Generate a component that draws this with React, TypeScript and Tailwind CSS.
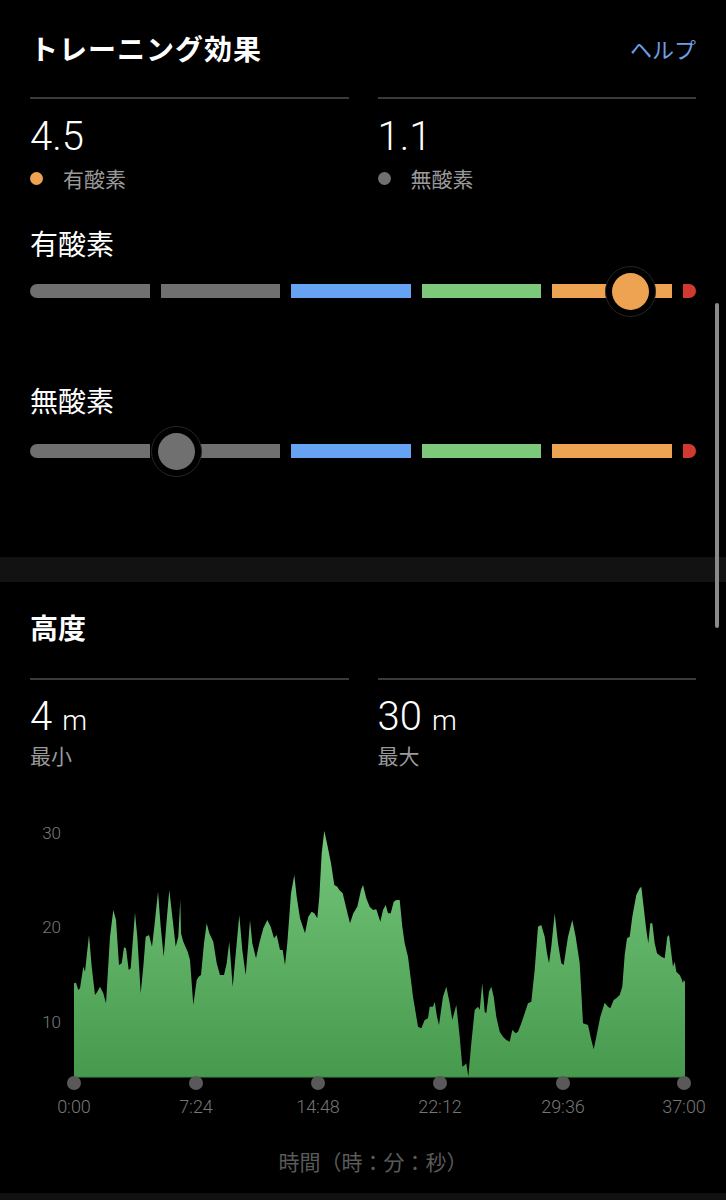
import React from "react";

const PTS: [number, number][] = [
  [74, 983.3], [76, 982.7], [78.3, 990], [80, 988.3], [83.3, 966.7], [85, 971.7], [89, 935], [91.7, 966.7],
  [95, 995], [97.3, 991.7], [100, 986.7], [103.3, 993.3], [106, 1003.3], [110, 936.7], [113.3, 910], [116, 920],
  [119, 965], [121.7, 963.3], [124, 947.3], [126, 948.3], [128.7, 970], [130.7, 968.3], [135, 912.7], [137.3, 936.7],
  [140.7, 993.3], [143.3, 966.7], [145.7, 936.7], [149, 935], [152, 946.7], [154.7, 923.3], [158, 891.7], [160.7, 926.7],
  [163.7, 956.7], [166.7, 920], [169.3, 890], [172.7, 920], [175.7, 946.7], [178.3, 936.7], [180.3, 900], [181, 933.3],
  [183.3, 941.7], [187.7, 951.7], [190, 960], [193.3, 1005], [196.7, 980], [198.7, 976.7], [201, 975], [204, 943.3],
  [206.7, 923.3], [209.3, 933.3], [213.3, 941.7], [216.7, 963.3], [220, 975], [224, 975], [226.7, 963.3], [229.3, 941.7],
  [232.7, 986.7], [236.7, 943.3], [239.3, 915], [242.3, 950], [245.7, 975], [248.3, 943.3], [250, 920], [252.3, 943.3],
  [256, 958.3], [259.3, 943.3], [263.3, 928.3], [267.3, 920], [270.7, 926.7], [274, 938.3], [276.7, 935], [280, 950],
  [282.7, 950], [285, 965], [287.3, 943.3], [291, 893.3], [294.3, 875], [296.7, 896.7], [300, 918.3], [305, 933.3],
  [308.3, 916.7], [311.7, 911.7], [314.3, 913.3], [317.3, 918.3], [319.3, 896.7], [321.7, 853.3], [324.3, 830.7], [327.7, 846.7],
  [331, 863.3], [334.3, 885], [337.3, 886.7], [339.3, 890], [342.7, 893.3], [346.7, 910], [350, 923.3], [353.3, 913.3],
  [357.3, 906.7], [361, 890], [363, 885], [366.3, 898.3], [369.7, 906.7], [373, 910], [376.3, 909.3], [380.3, 921.7],
  [383, 910], [385.7, 905], [388, 913.3], [390.7, 913.3], [393.7, 901.7], [396.3, 900], [399.7, 900], [402.3, 926.7],
  [404.7, 943.3], [408, 956.7], [413, 996.7], [418, 1026.7], [421.3, 1028.3], [424.7, 1020], [428, 1018.3], [429.7, 1006.7],
  [433, 1006.7], [434.7, 1001.7], [437, 1016.7], [439, 1025], [443, 996.7], [446.3, 986.7], [449.7, 1003.3], [452.3, 1020],
  [456.3, 1005], [459.7, 1036.7], [462.3, 1066.7], [464.7, 1065], [466.3, 1063.3], [468.3, 1076.7], [471.3, 1043.3], [474.7, 1010],
  [478, 1006.7], [479.7, 1010], [482.3, 983.3], [484.7, 1011.7], [486.3, 1013.3], [489, 991.7], [491.3, 986.7], [493.7, 996.7],
  [496.3, 1016.7], [499.7, 1031.7], [503, 1036.7], [506.3, 1040], [509.7, 1041.7], [512.3, 1030], [515.7, 1033.3], [518, 1031.7],
  [521.3, 1023.3], [524.7, 1013.3], [528, 1003.3], [531.3, 1001.7], [534.7, 970], [538, 926.7], [541.3, 925], [544.7, 936.7],
  [547, 953.3], [549, 963.3], [551.3, 946.7], [554.7, 913.3], [558, 943.3], [561.3, 963.3], [563.7, 965], [568, 936.7],
  [572.3, 920], [575.7, 936.7], [579.7, 963.3], [583, 1023.3], [588, 1025], [591.3, 1040], [593.7, 1049.3], [596.3, 1036.7],
  [600.3, 1016.7], [604.7, 1002.7], [608, 1006.7], [610.3, 1008.3], [613.7, 1000], [616.3, 998.3], [619.7, 995], [622.3, 986.7],
  [624.7, 955], [627, 938.3], [629.7, 936.7], [632.3, 916.7], [636.3, 895], [639.7, 888.3], [641.3, 886.7], [644, 910],
  [646.3, 930], [648.3, 943.3], [650.3, 923.3], [652.3, 923.3], [654.7, 943.3], [657, 953.3], [661.3, 956.7], [664.7, 958.3],
  [667.3, 936.7], [669, 935], [671.3, 953.3], [673, 966.7], [674.7, 961.7], [676.3, 971.7], [679.7, 975], [681.3, 978.3],
  [683, 983.3], [683.7, 980], [685, 981.7],
];

const AREA =
  "M74 1077 " + PTS.map(([x, y]) => `L${x} ${y}`).join(" ") + " L685 1077 Z";

const TICKS: [number, string][] = [
  [74, "0:00"],
  [196, "7:24"],
  [318, "14:48"],
  [440, "22:12"],
  [563, "29:36"],
  [684, "37:00"],
];

function Bar({ knob, knobColor, className = "" }: { knob: number; knobColor: string; className?: string }) {
  return (
    <div className={`relative h-[52px] flex items-center ${className}`}>
      <div className="flex w-full gap-[11px] h-[14px]">
        <div className="flex-1 bg-[#707070] rounded-l-full" />
        <div className="flex-1 bg-[#707070]" />
        <div className="flex-1 bg-[#66a3f2]" />
        <div className="flex-1 bg-[#7dc97b]" />
        <div className="flex-1 bg-[#eea352]" />
        <div className="w-[13px] bg-[#d23a30] rounded-r-full" />
      </div>
      <div
        className="absolute top-[0.5px] w-[51px] h-[51px] rounded-full bg-black border border-[#262626] flex items-center justify-center"
        style={{ left: knob - 25.5 }}
      >
        <div className={`w-[37px] h-[37px] rounded-full ${knobColor}`} />
      </div>
    </div>
  );
}

export default function App() {
  const jp = "font-['Noto_Sans_CJK_JP',sans-serif]";
  const num = "font-['Roboto','Liberation_Sans',sans-serif]";
  return (
    <div className={`relative w-[726px] h-[1200px] bg-black overflow-hidden ${jp}`}>
      {/* Training effect */}
      <section className="px-[30px] pt-[28px]">
        <div className="flex items-center justify-between h-[40px]">
          <h1 className="text-[28px] leading-[40px] font-bold text-white tracking-[1px]">トレーニング効果</h1>
          <span className="text-[22px] leading-[40px] text-[#6e9ee4]">ヘルプ</span>
        </div>
        <div className="grid grid-cols-2 gap-x-[29px] mt-[29px]">
          <div>
            <div className="h-[2px] bg-[#3a3a3a]" />
            <div className={`mt-[14px] text-[40px] leading-[48px] font-light text-white ${num}`}>4.5</div>
            <div className="mt-[3px] flex items-center h-[28px]">
              <span className="w-[13px] h-[13px] rounded-full bg-[#eea352]" />
              <span className="ml-[20px] text-[21px] leading-[28px] text-[#9a9a9a]">有酸素</span>
            </div>
          </div>
          <div>
            <div className="h-[2px] bg-[#3a3a3a]" />
            <div className={`mt-[14px] text-[40px] leading-[48px] font-light text-white ${num}`}>1.1</div>
            <div className="mt-[3px] flex items-center h-[28px]">
              <span className="w-[13px] h-[13px] rounded-full bg-[#707070]" />
              <span className="ml-[20px] text-[21px] leading-[28px] text-[#9a9a9a]">無酸素</span>
            </div>
          </div>
        </div>
        <div className="mt-[31px] text-[28px] leading-[40px] text-white">有酸素</div>
        <Bar knob={600} knobColor="bg-[#eea352]" className="mt-[2px]" />
        <div className="mt-[63px] text-[28px] leading-[40px] text-white">無酸素</div>
        <Bar knob={146} knobColor="bg-[#707070]" className="mt-[5px]" />
      </section>

      <div className="mt-[80px] h-[25px] bg-[#121212]" />

      {/* Altitude */}
      <section className="px-[30px] mt-[25px]">
        <h2 className="text-[28px] leading-[40px] font-bold text-white">高度</h2>
        <div className="grid grid-cols-2 gap-x-[29px] mt-[31px]">
          <div>
            <div className="h-[2px] bg-[#3a3a3a]" />
            <div className={`mt-[13px] leading-[48px] font-light text-white ${num}`}>
              <span className="text-[40px]">4</span>
              <span className="text-[28px] ml-[10px]">m</span>
            </div>
            <div className="-mt-[8px] text-[21px] leading-[28px] text-[#9a9a9a]">最小</div>
          </div>
          <div>
            <div className="h-[2px] bg-[#3a3a3a]" />
            <div className={`mt-[13px] leading-[48px] font-light text-white ${num}`}>
              <span className="text-[40px]">30</span>
              <span className="text-[28px] ml-[10px]">m</span>
            </div>
            <div className="-mt-[8px] text-[21px] leading-[28px] text-[#9a9a9a]">最大</div>
          </div>
        </div>
      </section>

      <svg className="block mt-[46px]" width="726" height="310" viewBox="0 815 726 310">
        <defs>
          <linearGradient id="g" x1="0" y1="830" x2="0" y2="1077" gradientUnits="userSpaceOnUse">
            <stop offset="0" stopColor="#74c67b" />
            <stop offset="1" stopColor="#47994e" />
          </linearGradient>
        </defs>
        {[
          [30, 833],
          [20, 927],
          [10, 1022],
        ].map(([v, y]) => (
          <text
            key={v}
            x="61"
            y={y}
            textAnchor="end"
            dominantBaseline="central"
            fill="#7a7a7a"
            fontSize="17"
            fontWeight="300"
            fontFamily="Roboto, 'Liberation Sans', sans-serif"
          >
            {v}
          </text>
        ))}
        <path d={AREA} fill="url(#g)" />
        <line x1="74" y1="1077" x2="685" y2="1077" stroke="#3f8f46" strokeWidth="1" />
        {TICKS.map(([x, t]) => (
          <g key={t}>
            <circle cx={x} cy="1083" r="7" fill="#595959" />
            <text
              x={x}
              y="1106"
              textAnchor="middle"
              dominantBaseline="central"
              fill="#767676"
              fontSize="18"
              fontWeight="300"
              fontFamily="Roboto, 'Liberation Sans', sans-serif"
            >
              {t}
            </text>
          </g>
        ))}
      </svg>

      <div className="mt-[22px] text-center text-[21px] leading-[28px] text-[#5a5a5a] pl-[20px]">時間（時：分：秒）</div>

      <div className="mt-[18px] h-[40px] bg-[#111111]" />

      {/* scrollbar */}
      <div className="absolute left-[715px] top-[303px] w-[4px] h-[325px] rounded-full bg-[#8a8a8a]" />
    </div>
  );
}
